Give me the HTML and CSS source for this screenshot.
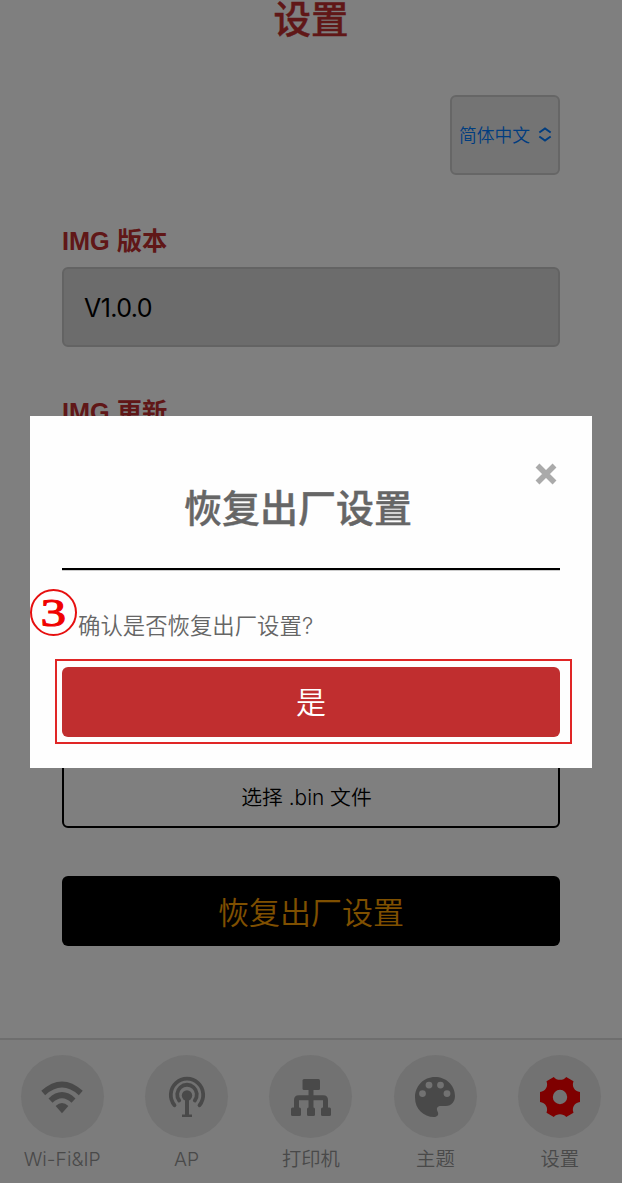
FILE: index.html
```html
<!DOCTYPE html>
<html lang="zh-CN">
<head>
<meta charset="utf-8">
<title>设置</title>
<link rel="stylesheet" href="styles.css">
</head>
<body>
<div class="screen">
  <main class="page">
    <h1 class="page-title">设置</h1>
    <div class="lang-row">
      <div class="lang-select">
        <span>简体中文</span>
        <svg class="lang-arrows" viewBox="0 0 13 14"><path d="M1.2 5.200 6.500 1.300 11.800 5.200M1.200 8.800 6.500 12.700 11.800 8.800"/></svg>
      </div>
    </div>
    <section class="field">
      <h2 class="field-label">IMG 版本</h2>
      <div class="field-value">V1.0.0</div>
    </section>
    <section class="field upload">
      <h2 class="field-label">IMG 更新</h2>
      <div class="file-button">选择 .bin 文件</div>
    </section>
    <div class="reset-button">恢复出厂设置</div>
  </main>
  <nav class="tabs">
    <div class="tab">
      <div class="tab-icon"><svg viewBox="0 0 42 42"><g fill="none" stroke="currentColor" stroke-width="5.800"><path d="M2.200 17Q21 0 39.800 17"/><path d="M9.500 24.600Q21 13.700 32.500 24.600"/></g><path d="M14.600 30Q21 24 27.400 30L21 37.300Z"/></svg></div>
      <span>Wi-Fi&amp;IP</span>
    </div>
    <div class="tab">
      <div class="tab-icon"><svg viewBox="0 0 42 42"><circle cx="21" cy="19.500" r="5.200"/><path d="M19 21h4v17.500h3v2.500H16v-2.500h3Z"/><g fill="none" stroke="currentColor" stroke-width="3.800" stroke-linecap="round"><path d="M8.500 29.200A16.200 16.200 0 1 1 33.500 29.200"/><path d="M13.200 24.500A9.800 9.800 0 1 1 28.800 24.500"/></g></svg></div>
      <span>AP</span>
    </div>
    <div class="tab">
      <div class="tab-icon"><svg viewBox="0 0 42 42"><rect x="12.500" y="3" width="17.500" height="11" rx="1.500"/><g fill="none" stroke="currentColor" stroke-width="5"><path d="M21 13v20M6.500 33V24Q6.500 21.700 8.800 21.700H33.200Q35.500 21.700 35.500 24V33"/></g><rect x="1" y="31.500" width="10" height="8.500" rx="1.500"/><rect x="17" y="31.500" width="8" height="8.500" rx="1.500"/><rect x="31" y="31.500" width="10" height="8.500" rx="1.500"/></svg></div>
      <span>打印机</span>
    </div>
    <div class="tab">
      <div class="tab-icon"><svg viewBox="0 0 42 42"><path fill-rule="evenodd" d="M21 1C9.500 1 1 10 1 21.500 1 33 9.500 41 20 41 23.500 41 25 38.500 23.800 36 22 32.500 23 30 27 30H32C37.500 30 41 25.500 41 20 41 9 32 1 21 1ZM8.500 21a3.400 3.400 0 1 1 0-6.800 3.400 3.400 0 0 1 0 6.800Zm6.500-8.500a3.400 3.400 0 1 1 0-6.800 3.400 3.400 0 0 1 0 6.800Zm11.500 0a3.400 3.400 0 1 1 0-6.800 3.400 3.400 0 0 1 0 6.800Zm6.500 8.500a3.400 3.400 0 1 1 0-6.800 3.400 3.400 0 0 1 0 6.800Z"/></svg></div>
      <span>主题</span>
    </div>
    <div class="tab tab-active">
      <div class="tab-icon"><svg viewBox="0 0 42 42"><path fill-rule="evenodd" d="M14.800 1C17.500 4.800 24.500 4.800 27.200 1L34.500 5.200C32.500 10.500 35.500 15.200 41 16V26C35.500 26.800 32.500 31.500 34.500 36.800L27.200 41C24.500 37.200 17.500 37.200 14.800 41L7.500 36.800C9.500 31.500 6.500 26.800 1 26V16C6.500 15.200 9.500 10.500 7.500 5.200ZM21 13.800a7.200 7.200 0 1 0 0 14.400 7.200 7.200 0 0 0 0-14.400Z"/></svg></div>
      <span>设置</span>
    </div>
  </nav>
</div>
<div class="overlay">
  <div class="dialog">
    <svg class="close" viewBox="0 0 22 22"><path d="M2.500 2.500 19.500 19.500M19.500 2.500 2.500 19.500"/></svg>
    <h2 class="dialog-title">恢复出厂设置</h2>
    <div class="divider"></div>
    <p class="dialog-text">确认是否恢复出厂设置?</p>
    <div class="confirm">是</div>
    <div class="step-frame"></div>
    <div class="step-badge"><span>3</span></div>
  </div>
</div>
</body>
</html>
```
FILE: styles.css
```css
* { box-sizing: border-box; }
body {
  margin: 0;
  background: #fff;
  font-family: Inter, "Noto Sans CJK SC", sans-serif;
}
h1, h2, p { margin: 0; }
.screen {
  height: 1183px;
  overflow: hidden;
  display: flex;
  flex-direction: column;
}
.page { flex: 1; padding: 0 62px; }
.page-title {
  height: 95px;
  font-size: 37.500px;
  line-height: 40px;
  font-weight: 500;
  -webkit-text-stroke: 0.400px #c02e2f;
  text-align: center;
  color: #c02e2f;
}
.lang-row { display: flex; justify-content: flex-end; }
.lang-select {
  width: 110px;
  height: 80px;
  border: 2px solid #ccc;
  border-radius: 6px;
  background: #e9e9e9;
  color: #007aff;
  font-size: 17.800px;
  font-weight: 350;
  display: flex;
  align-items: center;
  justify-content: space-between;
  padding: 0 6px 2px 7px;
  white-space: nowrap;
}
.lang-arrows {
  width: 14px;
  height: 15px;
  fill: none;
  stroke: #007aff;
  stroke-width: 1.800;
}
.field { margin-top: 50px; }
.field-label {
  height: 42px;
  line-height: 32px;
  font-family: "Liberation Sans", "Noto Sans CJK SC", sans-serif;
  font-size: 25.300px;
  font-weight: 700;
  color: #c02e2f;
}
.field-value {
  height: 80px;
  border: 2px solid #c6c6c6;
  border-radius: 6px;
  background: #d8d8d8;
  padding-left: 20px;
  font-size: 25px;
  line-height: 78px;
  letter-spacing: -0.600px;
}
.field.upload { margin-top: 49px; }
.file-button {
  height: 70px;
  margin-top: 320px;
  padding-right: 9px;
  border: 2px solid #000;
  border-radius: 6px;
  text-align: center;
  font-size: 20.800px;
  font-weight: 350;
  line-height: 76px;
}
.reset-button {
  height: 70px;
  margin-top: 48px;
  border-radius: 6px;
  background: #000;
  color: #ffa000;
  font-size: 31px;
  font-weight: 350;
  line-height: 73px;
  text-align: center;
}
.tabs {
  height: 145px;
  border-top: 2px solid #dcdcdc;
  background: #f8f8f8;
  display: grid;
  grid-template-columns: repeat(5, 1fr);
}
.tab {
  padding-top: 15px;
  display: flex;
  flex-direction: column;
  align-items: center;
  color: #939393;
  font-size: 19.300px;
  font-weight: 350;
  line-height: 28px;
}
.tab span { margin-top: 7px; }
.tab-icon {
  width: 83px;
  height: 83px;
  border-radius: 50%;
  background: #e4e4e4;
  display: grid;
  place-items: center;
}
.tab-icon svg { width: 42px; height: 42px; fill: currentColor; }
.tab-active svg { color: #ff0000; }
.overlay {
  position: fixed;
  inset: 0;
  background: rgba(0, 0, 0, 0.5);
}
.dialog {
  position: relative;
  width: 562px;
  height: 352px;
  margin: 416px 0 0 30px;
  padding: 0 32px;
  background: #fefefe;
  color: #666;
}
.close {
  position: absolute;
  right: 35px;
  top: 47px;
  width: 22px;
  height: 22px;
  fill: none;
  stroke: #aaa;
  stroke-width: 5.500;
}
.dialog-title {
  height: 152px;
  padding: 66px 26px 0 0;
  font-size: 38px;
  line-height: 52px;
  font-weight: 500;
  -webkit-text-stroke: 0.400px #666;
  text-align: center;
}
.divider {
  height: 3px;
  border-top: 2px solid #000;
  border-bottom: 1px solid #ccc;
}
.dialog-text {
  height: 96px;
  padding: 39px 0 0 16px;
  font-size: 22.400px;
  font-weight: 350;
  line-height: 32px;
}
.confirm {
  height: 70px;
  border-radius: 6px;
  background: #c02e2f;
  color: #fff;
  font-size: 30px;
  font-weight: 350;
  line-height: 70px;
  text-align: center;
}
.step-frame {
  position: absolute;
  left: 25px;
  top: 243px;
  width: 517px;
  height: 85px;
  border: 2px solid #e02626;
}
.step-badge {
  position: absolute;
  left: 0;
  top: 173px;
  width: 47px;
  height: 47px;
  border: 2.500px solid #e60f0f;
  border-radius: 50%;
  color: #f00000;
  font: 400 41px/42px "Liberation Serif", serif;
  text-align: center;
}
.step-badge span {
  display: inline-block;
  transform: scaleX(1.25);
  -webkit-text-stroke: 1px #f00000;
}
```
